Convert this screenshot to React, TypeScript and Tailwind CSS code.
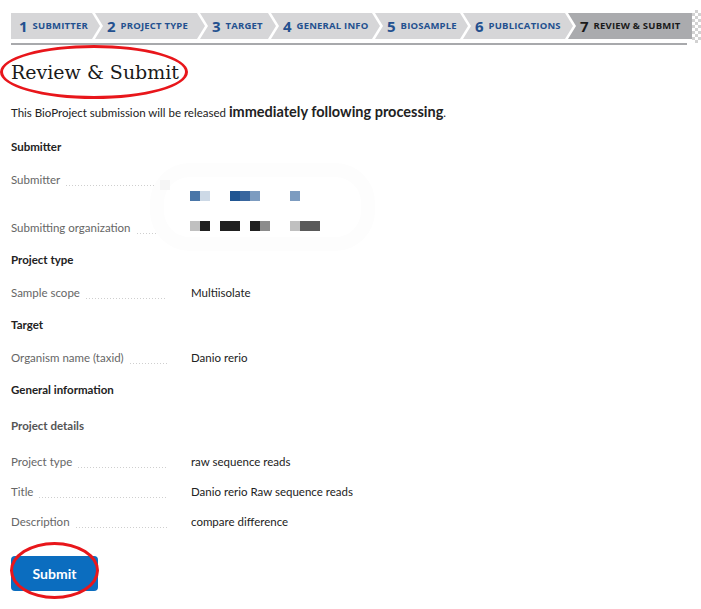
import React from "react";

const tabs = [
  { n: "1", label: "SUBMITTER", w: "w-[89px]", shape: "first" },
  { n: "2", label: "PROJECT TYPE", w: "w-[110px]", shape: "mid" },
  { n: "3", label: "TARGET", w: "w-[76px]", shape: "mid" },
  { n: "4", label: "GENERAL INFO", w: "w-[109px]", shape: "mid" },
  { n: "5", label: "BIOSAMPLE", w: "w-[93px]", shape: "mid" },
  { n: "6", label: "PUBLICATIONS", w: "w-[110px]", shape: "mid" },
  { n: "7", label: "REVIEW & SUBMIT", w: "w-[124px]", shape: "last" },
];

const shapes: Record<string, string> = {
  first: "pl-2 [clip-path:polygon(0_0,calc(100%_-_8px)_0,100%_50%,calc(100%_-_8px)_100%,0_100%)]",
  mid: "pl-3 [clip-path:polygon(0_0,calc(100%_-_8px)_0,100%_50%,calc(100%_-_8px)_100%,0_100%,8px_50%)]",
  last: "pl-3 [clip-path:polygon(0_0,100%_0,100%_100%,0_100%,8px_50%)]",
};

// redacted values, drawn as the pixel blocks of the screenshot
const blue = [
  { w: "w-[10px]", c: "bg-[#4a76a8]" },
  { w: "w-[10px]", c: "bg-[#cdd9e6]" },
  { w: "w-[20px]", c: "bg-transparent" },
  { w: "w-[10px]", c: "bg-[#1f5592]" },
  { w: "w-[10px]", c: "bg-[#39669e]" },
  { w: "w-[10px]", c: "bg-[#7d9cc0]" },
  { w: "w-[30px]", c: "bg-transparent" },
  { w: "w-[10px]", c: "bg-[#7d9cc0]" },
];

const dark = [
  { w: "w-[10px]", c: "bg-[#c0c0c0]" },
  { w: "w-[10px]", c: "bg-[#202020]" },
  { w: "w-[10px]", c: "bg-transparent" },
  { w: "w-[20px]", c: "bg-[#202020]" },
  { w: "w-[10px]", c: "bg-transparent" },
  { w: "w-[10px]", c: "bg-[#202020]" },
  { w: "w-[10px]", c: "bg-[#8c8c8c]" },
  { w: "w-[20px]", c: "bg-transparent" },
  { w: "w-[10px]", c: "bg-[#c0c0c0]" },
  { w: "w-[20px]", c: "bg-[#5a5a5a]" },
];

function Pixels({ cells }: { cells: { w: string; c: string }[] }) {
  return (
    <div className="-ml-px flex h-[10px]">
      {cells.map((p, i) => (
        <span key={i} className={`${p.w} ${p.c} h-[10px]`} />
      ))}
    </div>
  );
}

function Row({ label, mt, children }: { label: string; mt: string; children: React.ReactNode }) {
  return (
    <div className={`${mt} flex leading-[18px]`}>
      <div className="flex w-[156px] shrink-0 items-start">
        <span className="text-[#666]">{label}</span>
        <span className="ml-[6px] mt-[14px] h-px flex-1 bg-[linear-gradient(to_right,#cfcfcf_34%,transparent_0)] bg-[length:3px_1px] bg-repeat-x" />
      </div>
      <div className="ml-[24px] text-[#222]">{children}</div>
    </div>
  );
}

function Heading({ mt, children, muted }: { mt: string; children: React.ReactNode; muted?: boolean }) {
  return (
    <div className={`${mt} font-bold leading-[18px] ${muted ? "text-[#555]" : "text-[#222]"}`}>{children}</div>
  );
}

export default function App() {
  return (
    <div className="relative min-h-[609px] bg-white px-[11px] pt-[13px] font-['Lato',sans-serif] text-[11.5px]">
      <div className="flex h-[26px] items-start">
        {tabs.map((t, i) => (
          <div
            key={t.n}
            className={`${t.w} ${shapes[t.shape]} ${i > 0 ? "-ml-[5px]" : ""} ${
              t.shape === "last" ? "bg-[#aaabae] text-[#1a1a1a]" : "bg-[#d6d6d8] text-[#23508f]"
            } flex h-[26px] shrink-0 items-center gap-[5px] font-['Open_Sans',sans-serif] font-bold`}
          >
            <span className="text-[15px] leading-none">{t.n}</span>
            <span className="text-[9.5px] leading-none tracking-[0.2px]">{t.label}</span>
          </div>
        ))}
        <div className="-mt-[3px] h-[33px] w-[10px] shrink-0 bg-[repeating-conic-gradient(#d2d2d2_0_25%,#ffffff_0_50%)] bg-[length:6px_6px]" />
      </div>
      <div className="mt-[4px] h-[2px] w-[676px] bg-[#a8a9ac]" />

      <h1 className="mt-[13px] font-['DejaVu_Serif',serif] text-[19px] leading-[28px] text-[#1a1a1a]">Review &amp; Submit</h1>

      <p className="mt-[16px] text-[11.5px] leading-[20px] text-[#222]">
        This BioProject submission will be released{" "}
        <span className="text-[14.5px] font-bold">immediately following processing</span>.
      </p>

      <Heading mt="mt-[15px]">Submitter</Heading>
      <Row label="Submitter" mt="mt-[15px]">
        <div className="pt-[20px]">
          <Pixels cells={blue} />
        </div>
      </Row>
      <Row label="Submitting organization" mt="mt-[18px]">
        <div className="pt-[2px]">
          <Pixels cells={dark} />
        </div>
      </Row>

      <Heading mt="mt-[14px]">Project type</Heading>
      <Row label="Sample scope" mt="mt-[15px]">Multiisolate</Row>

      <Heading mt="mt-[14px]">Target</Heading>
      <Row label="Organism name (taxid)" mt="mt-[15px]">Danio rerio</Row>

      <Heading mt="mt-[14px]">General information</Heading>
      <Heading mt="mt-[18px]" muted>
        Project details
      </Heading>
      <Row label="Project type" mt="mt-[18px]">raw sequence reads</Row>
      <Row label="Title" mt="mt-[12px]">Danio rerio Raw sequence reads</Row>
      <Row label="Description" mt="mt-[12px]">compare difference</Row>

      <button className="mt-[25px] flex h-[35px] w-[87px] items-center justify-center rounded-[4px] bg-[#0b6dbf] text-[14px] font-bold text-white">
        Submit
      </button>

      {/* faint redaction smear and red annotation rings */}
      <div className="pointer-events-none absolute left-[150px] top-[163px] h-[88px] w-[225px] rounded-[40px] border-[14px] border-[#fdfdfd]" />
      <div className="pointer-events-none absolute left-[160px] top-[180px] h-[10px] w-[10px] bg-[#f5f5f5]" />
      <div className="pointer-events-none absolute left-[0px] top-[45px] h-[54px] w-[188px] rounded-[50%] border-[3px] border-[#e8161b]" />
      <div className="pointer-events-none absolute left-[10px] top-[542px] h-[57px] w-[89px] rounded-[50%] border-[3px] border-[#e8161b]" />
    </div>
  );
}
